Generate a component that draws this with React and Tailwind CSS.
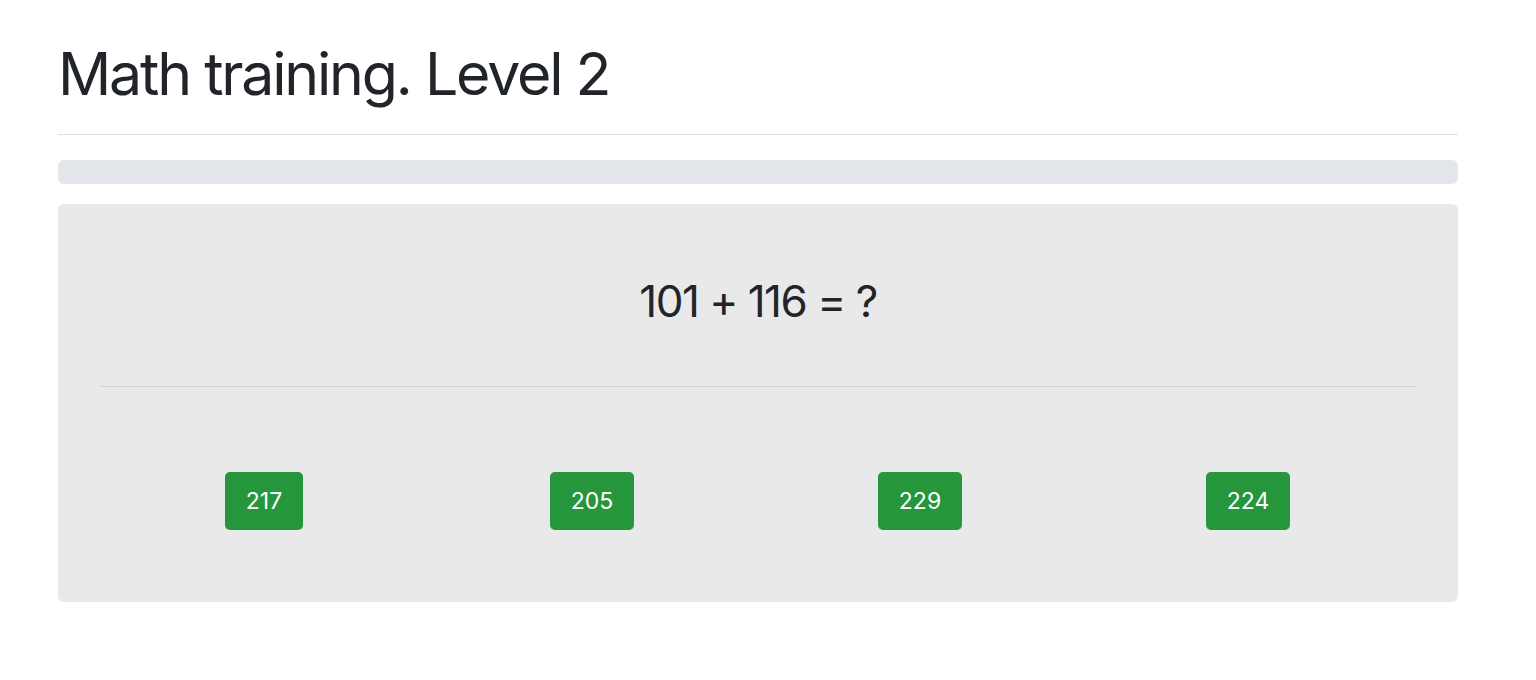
export default function App() {
  const answers = [217, 205, 229, 224];
  return (
    <div className="min-h-[680px] bg-white text-[#212529]" style={{ fontFamily: "Inter, 'Noto Sans', sans-serif" }}>
      <div className="ml-[58px] w-[1400px] pt-[38px]">
        <h1 className="text-[59px] leading-[72px] font-normal tracking-[-2.2px]">Math training. Level 2</h1>
        <hr className="mt-[24px] border-0 h-px bg-[#e2e2e2]" />
        <div className="mt-[25px] h-[24px] rounded-[6px] bg-[#e3e7eb]" />
        <div className="mt-[20px] h-[398px] rounded-[6px] bg-[#e9e9e9] px-[42px] pt-[69px]">
          <div className="text-center text-[44px] leading-[56px] tracking-[-1.5px]">101 + 116 = ?</div>
          <hr className="mt-[57px] border-0 h-px bg-[#d3d3d3]" />
          <div className="mt-[85px] grid grid-cols-4 pr-[4px]">
            {answers.map((a) => (
              <div key={a} className="flex justify-center">
                <button className="h-[58px] px-[21px] rounded-[5px] bg-[#25963c] text-white text-[23px]">{a}</button>
              </div>
            ))}
          </div>
        </div>
      </div>
    </div>
  );
}
